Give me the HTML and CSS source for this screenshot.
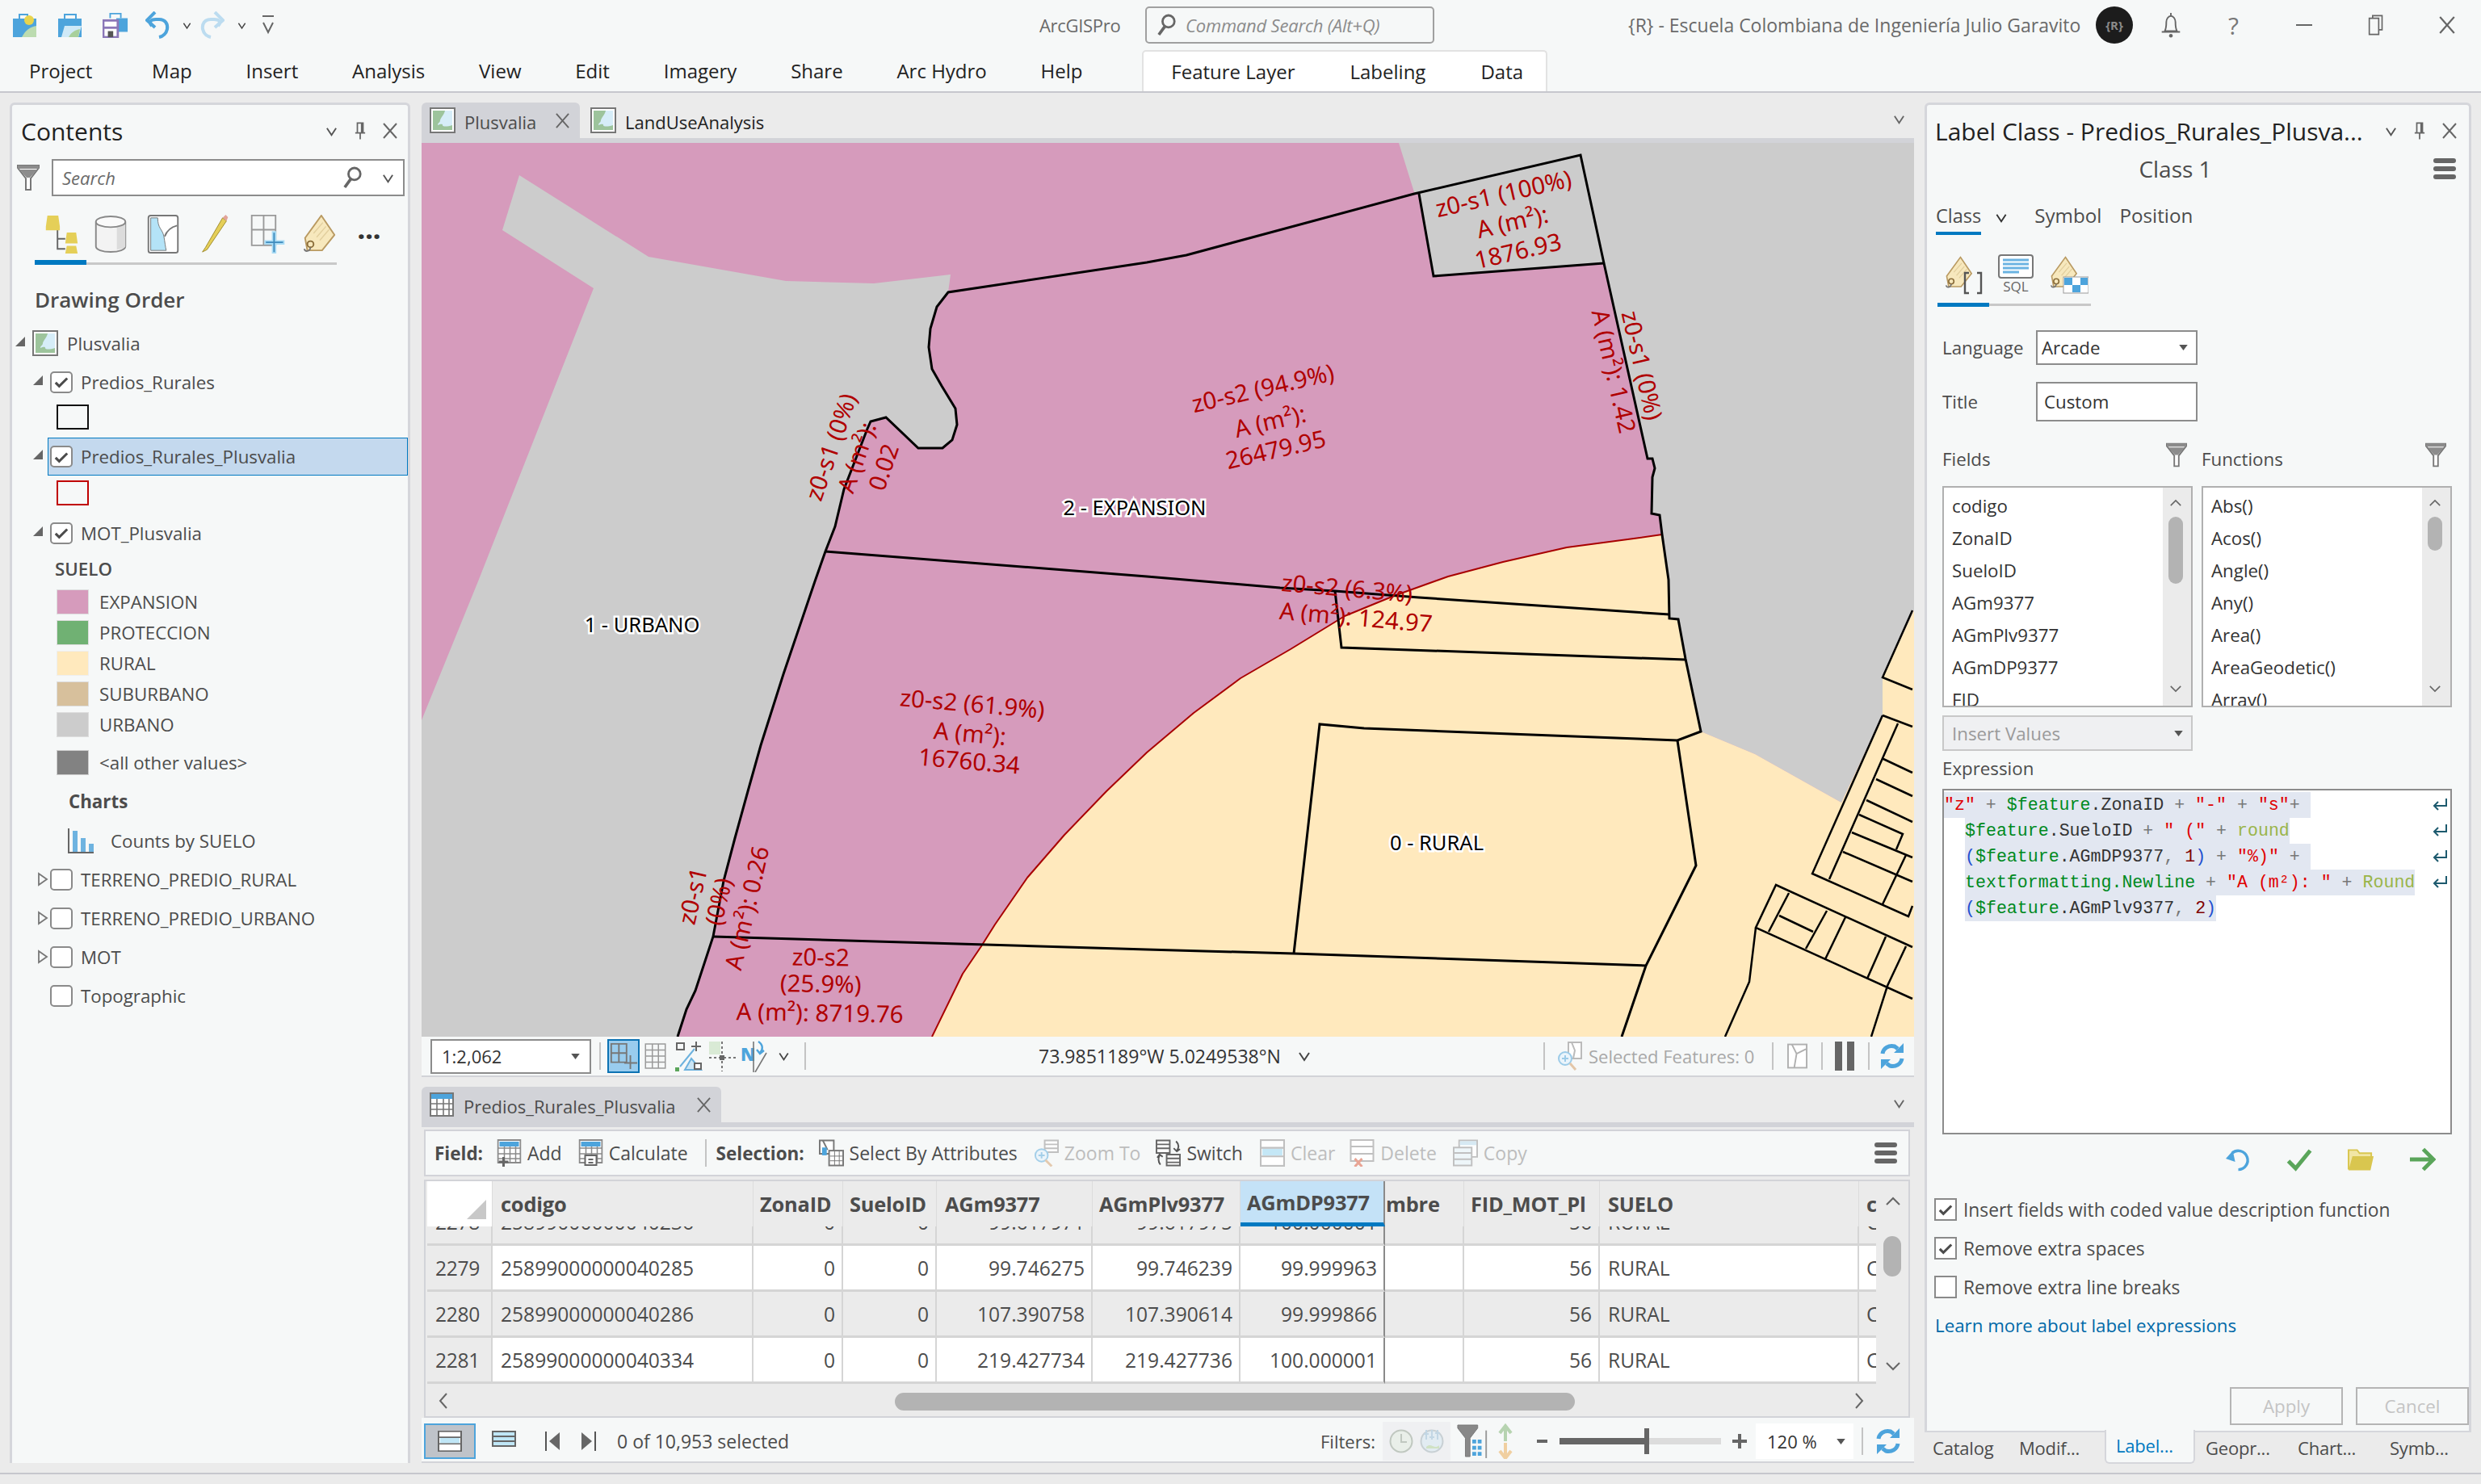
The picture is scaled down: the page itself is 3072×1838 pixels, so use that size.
FILE: index.html
```html
<!DOCTYPE html>
<html lang="en">
<head>
    <meta charset="UTF-8">
    <title>ArcGIS Pro - Plusvalia</title>
    <link rel="stylesheet" href="styles.css">
</head>
<body>
<svg class="defs" width="0" height="0">
    <symbol id="i-chev" viewBox="0 0 16 16"><path d="M2 4l6 9 6-9" fill="none" stroke="currentColor" stroke-width="2"/></symbol>
    <symbol id="i-x" viewBox="0 0 20 20"><path d="M2 1l16 18M18 1L2 19" fill="none" stroke="currentColor" stroke-width="2"/></symbol>
    <symbol id="i-pin" viewBox="0 0 16 26"><path d="M4 2h8v14H4zM1 16h14M8 16v9M10 2v14" fill="none" stroke="currentColor" stroke-width="2"/></symbol>
    <symbol id="i-funnel" viewBox="0 0 28 32"><path d="M1 1h26v3L17 17v14h-6V17L1 4z" fill="#fff" stroke="#777" stroke-width="2"/><path d="M1 1h26v4H1zM3 6h22l-9 10h-4z" fill="#8c8c8c"/></symbol>
    <symbol id="i-search" viewBox="0 0 26 30"><circle cx="15" cy="10" r="8" fill="none" stroke="#666" stroke-width="3"/><path d="M10 17L2 28" stroke="#666" stroke-width="4"/></symbol>
    <symbol id="i-map" viewBox="0 0 32 32"><rect x="1" y="1" width="30" height="30" fill="#fff" stroke="#777" stroke-width="2"/><rect x="4" y="4" width="24" height="24" fill="#d6edf8"/><path d="M4 4h15c-1 5-5 8-6 12 0 3-3 3-3 6 3-1 6-2 6 0 0 2 6 2 12 0v6H4z" fill="#9dc49c"/></symbol>
    <symbol id="i-check" viewBox="0 0 20 20"><path d="M2 11l5 5L18 5" fill="none" stroke="#4c4c4c" stroke-width="3.4"/></symbol>
    <symbol id="i-open" viewBox="0 0 14 14"><path d="M13 1v12H1z" fill="#666"/></symbol>
    <symbol id="i-closed" viewBox="0 0 14 18"><path d="M2 2l10 7-10 7z" fill="none" stroke="#777" stroke-width="1.8"/></symbol>
    <symbol id="i-ham" viewBox="0 0 28 26"><rect width="28" height="6" rx="3" fill="#666"/><rect y="10" width="28" height="6" rx="3" fill="#666"/><rect y="20" width="28" height="6" rx="3" fill="#666"/></symbol>
    <symbol id="i-drop" viewBox="0 0 12 8"><path d="M0 0h12L6 8z" fill="#555"/></symbol>
    <symbol id="i-refresh" viewBox="0 0 32 34"><path d="M4 14C5 7 12 3 19 5l4 3M28 20c-1 7-8 11-15 9l-4-3" fill="none" stroke="#4da4dc" stroke-width="5"/><path d="M30 1v12H18zM2 33V21h12z" fill="#4da4dc"/></symbol>
    <symbol id="i-tag" viewBox="0 0 42 50"><path d="M24 1l17 25-16 20H6L3 30z" fill="#f7e8bd" stroke="#b99a62" stroke-width="2"/><path d="M14 24l12-14M18 29l12-14M22 33l12-14" stroke="#e2cf9e" stroke-width="1.5"/><circle cx="10" cy="38" r="4" fill="none" stroke="#8a6d3a" stroke-width="2"/><path d="M10 42c-1 6-7 6-8 2" fill="none" stroke="#777" stroke-width="2"/></symbol>
    <symbol id="i-tablerow" viewBox="0 0 30 30"><rect x="1" y="1" width="28" height="28" fill="#fff" stroke="#8a8a8a" stroke-width="2"/><rect x="3" y="3" width="24" height="6" fill="#4da4dc"/><path d="M1 11h28M1 18h28M1 24h28M9 9v20M16 9v20M23 9v20" stroke="#8a8a8a" stroke-width="1.5"/></symbol>
    <symbol id="i-rows" viewBox="0 0 30 32" preserveAspectRatio="none"><rect x="1" y="1" width="28" height="30" fill="#fff" stroke="currentColor" stroke-width="2"/><rect x="3" y="11" width="24" height="8" fill="#bfe6f6"/><path d="M1 10h28M1 20h28" stroke="currentColor" stroke-width="2"/></symbol>
    <symbol id="i-wrap" viewBox="0 0 18 16"><path d="M17 1v9H3" fill="none" stroke="#1d5a6e" stroke-width="2"/><path d="M7 5l-5 5 5 5" fill="none" stroke="#1d5a6e" stroke-width="2"/></symbol>
</svg>

<div class="app">
    <header class="titlebar">
        <div class="qat">
            <svg class="qat-icon" viewBox="0 0 32 32"><path d="M9 8V3h10v5" fill="none" stroke="#4da4dc" stroke-width="2"/><rect x="1" y="8" width="29" height="23" fill="#4da4dc"/><path d="M12 31c5-9 9-12 18-14v14z" fill="#bcdcb0"/><circle cx="21" cy="10" r="6" fill="#e8d44d"/></svg>
            <svg class="qat-icon" viewBox="0 0 32 32"><path d="M9 8V3h14v5" fill="none" stroke="#4da4dc" stroke-width="2"/><path d="M1 31V8h29v23z" fill="#4da4dc"/><path d="M5 31l4-14h21l-4 14z" fill="#cfe9f7"/><path d="M14 31c3-6 8-9 14-10l-2 10z" fill="#a8d09c"/></svg>
            <svg class="qat-icon" viewBox="0 0 34 34"><path d="M10 8V2h14v6" fill="none" stroke="#4da4dc" stroke-width="2"/><rect x="18" y="8" width="15" height="18" fill="#4da4dc"/><rect x="1" y="11" width="19" height="22" fill="#fff" stroke="#8b77b8" stroke-width="3"/><rect x="1" y="19" width="19" height="3" fill="#8b77b8"/><rect x="7" y="25" width="7" height="8" fill="#555"/></svg>
            <svg class="qat-wide" viewBox="0 0 30 34"><path d="M8 18C4 14 6 10 13 10h4c8 0 11 6 10 12-1 5-5 9-10 10" fill="none" stroke="#4da4dc" stroke-width="4"/><path d="M12 1L2 11l10 9" fill="none" stroke="#4da4dc" stroke-width="4"/></svg>
            <svg class="qat-chev"><use href="#i-chev"/></svg>
            <svg class="qat-wide faint" viewBox="0 0 30 34"><path d="M22 18c4-4 2-8-5-8h-4C5 10 2 16 3 22c1 5 5 9 10 10" fill="none" stroke="#bcdcf0" stroke-width="4"/><path d="M18 1l10 10-10 9" fill="none" stroke="#bcdcf0" stroke-width="4"/></svg>
            <svg class="qat-chev"><use href="#i-chev"/></svg>
            <svg class="qat-more" viewBox="0 0 16 26"><path d="M1 2h14" stroke="#666" stroke-width="2"/><path d="M2 10l6 12 6-12" fill="none" stroke="#666" stroke-width="2"/></svg>
        </div>
        <span class="app-name">ArcGISPro</span>
        <div class="cmd-search">
            <svg class="cmd-ico"><use href="#i-search"/></svg>
            <span>Command Search (Alt+Q)</span>
        </div>
        <div class="user-area">
            <span class="org">{R} - Escuela Colombiana de Ingeniería Julio Garavito</span>
            <span class="avatar">{R}</span>
            <svg class="bell" viewBox="0 0 28 34"><path d="M14 1v4M6 25c2-4 2-8 2-12 0-4 3-8 6-8s6 4 6 8c0 4 0 8 2 12zM2 26h24" fill="none" stroke="#666" stroke-width="2"/><circle cx="14" cy="31" r="2.4" fill="#666"/></svg>
            <span class="help">?</span>
            <span class="min"></span>
            <svg class="restore" viewBox="0 0 24 30"><path d="M7 5V1h14v21h-5M2 5h14v24H2z" fill="none" stroke="#666" stroke-width="2"/></svg>
            <svg class="win-x"><use href="#i-x"/></svg>
        </div>
    </header>

    <nav class="ribbon">
        <span class="rib-first">Project</span>
        <span>Map</span><span>Insert</span><span>Analysis</span><span>View</span><span>Edit</span><span>Imagery</span><span>Share</span><span>Arc Hydro</span><span>Help</span>
        <div class="rib-context"><span>Feature Layer</span><span>Labeling</span><span>Data</span></div>
    </nav>

    <div class="workspace">
        <!-- contents pane -->
        <aside class="contents">
            <div class="pane-head">
                <span class="contents-title">Contents</span>
                <div class="pane-ctl"><svg class="c-chev"><use href="#i-chev"/></svg><svg class="c-pin"><use href="#i-pin"/></svg><svg class="c-x"><use href="#i-x"/></svg></div>
            </div>
            <div class="search-row">
                <svg class="funnel"><use href="#i-funnel"/></svg>
                <div class="search-box"><span>Search</span><svg class="search-ico"><use href="#i-search"/></svg><svg class="c-chev"><use href="#i-chev"/></svg></div>
            </div>
            <div class="view-icons">
                <svg viewBox="0 0 46 50" class="vi vi-tree"><path d="M18 18v26h10M18 31h10" fill="none" stroke="#666" stroke-width="2"/><path d="M5 1h14l2 14H3zM3 15h18v5H3z" fill="#e5cf58"/><path d="M30 23h12l2 14H28zM30 40h12l2 10H28z" fill="#e5cf58"/></svg>
                <svg viewBox="0 0 40 50" class="vi vi-db"><path d="M1 9v32c0 4 8 7 19 7s19-3 19-7V9" fill="#f3f3f3" stroke="#888" stroke-width="2"/><path d="M28 16v29c5-1 11-2 11-4V12z" fill="#dcdcdc"/><ellipse cx="20" cy="9" rx="19" ry="7" fill="#fafafa" stroke="#888" stroke-width="2"/></svg>
                <svg viewBox="0 0 40 50" class="vi vi-sheet"><rect x="1" y="1" width="38" height="48" rx="3" fill="#fff" stroke="#777" stroke-width="2"/><path d="M4 4h9c0 14 6 14 8 24 1 6 2 14 3 18H4z" fill="#b4e3f7" stroke="#777"/><path d="M22 28c3-8 8-12 16-14" fill="none" stroke="#777" stroke-width="2"/></svg>
                <svg viewBox="0 0 36 50" class="vi vi-pencil"><path d="M28 4L6 42l-4 6 6-3L33 8z" fill="#e5cf58" stroke="#a08c30"/><path d="M28 4l5 4 2-5-3-3z" fill="#e2a49a"/></svg>
                <svg viewBox="0 0 46 52" class="vi vi-grid"><path d="M1 1h32v40H1zM17 1v40M1 20h32" fill="none" stroke="#999" stroke-width="2"/><path d="M28 22h6v12h11v6H34v12h-6V40H18v-6h10z" fill="#a9dcf5"/><path d="M31 24v26M20 37h23" stroke="#3f8bbd" stroke-width="2"/></svg>
                <svg viewBox="0 0 42 50" class="vi vi-tag"><use href="#i-tag"/></svg>
                <span class="vi-dots">...</span>
            </div>
            <div class="view-bar"><span></span></div>
            <h3 class="drawing-order">Drawing Order</h3>
            <ul class="tree">
                <li class="row map-row"><svg class="exp"><use href="#i-open"/></svg><svg class="map-ico"><use href="#i-map"/></svg><span>Plusvalia</span></li>
                <li class="row layer"><svg class="exp"><use href="#i-open"/></svg><span class="cb"><svg><use href="#i-check"/></svg></span><span>Predios_Rurales</span></li>
                <li class="sw-row"><span class="sw sw-black"></span></li>
                <li class="row layer selected"><svg class="exp"><use href="#i-open"/></svg><span class="cb"><svg><use href="#i-check"/></svg></span><span>Predios_Rurales_Plusvalia</span></li>
                <li class="sw-row sw-row-tall"><span class="sw sw-red"></span></li>
                <li class="row layer"><svg class="exp"><use href="#i-open"/></svg><span class="cb"><svg><use href="#i-check"/></svg></span><span>MOT_Plusvalia</span></li>
                <li class="legend-head">SUELO</li>
                <li class="legend"><span class="sw sw-exp"></span>EXPANSION</li>
                <li class="legend"><span class="sw sw-pro"></span>PROTECCION</li>
                <li class="legend"><span class="sw sw-rur"></span>RURAL</li>
                <li class="legend"><span class="sw sw-sub"></span>SUBURBANO</li>
                <li class="legend"><span class="sw sw-urb"></span>URBANO</li>
                <li class="legend legend-other"><span class="sw sw-oth"></span>&lt;all other values&gt;</li>
                <li class="charts-head">Charts</li>
                <li class="chart-row"><svg viewBox="0 0 32 32" class="chart-ico"><path d="M1 1v30h31" fill="none" stroke="#666" stroke-width="2"/><rect x="6" y="4" width="6" height="26" fill="#6eb3e0"/><rect x="16" y="13" width="6" height="17" fill="#6eb3e0"/><rect x="26" y="20" width="6" height="10" fill="#6eb3e0"/></svg>Counts by SUELO</li>
                <li class="row layer"><svg class="exp-c"><use href="#i-closed"/></svg><span class="cb"></span><span>TERRENO_PREDIO_RURAL</span></li>
                <li class="row layer"><svg class="exp-c"><use href="#i-closed"/></svg><span class="cb"></span><span>TERRENO_PREDIO_URBANO</span></li>
                <li class="row layer"><svg class="exp-c"><use href="#i-closed"/></svg><span class="cb"></span><span>MOT</span></li>
                <li class="row layer no-exp"><span class="cb"></span><span>Topographic</span></li>
            </ul>
        </aside>

        <!-- map and table -->
        <main class="center">
            <div class="tabstrip">
                <div class="doc-tab active"><svg class="map-ico"><use href="#i-map"/></svg><span>Plusvalia</span><svg class="tab-x"><use href="#i-x"/></svg></div>
                <div class="doc-tab second"><svg class="map-ico"><use href="#i-map"/></svg><span>LandUseAnalysis</span></div>
                <svg class="strip-chev"><use href="#i-chev"/></svg>
            </div>
            <div class="strip-line"></div>
            <svg class="map" viewBox="522 177 1848 1107" width="1848" height="1107">
                <rect class="f-pink" x="522" y="177" width="1848" height="1107"/>
                <path class="f-gray" d="M643 217L622 285 735 357 592 720 522 892V1284H839L850 1250 861 1227 883 1160 896 1091 910 1038 926 980 942 923 970 835 1009 720 1022 683 1034 652 1045 606 1074 531 1078 522 1097 517 1137 555H1167L1179 545 1185 526 1183 506 1166 478 1154 457 1150 430 1152 407 1160 380 1174 362 1177 340 1082 351 973 348 803 318z"/>
                <path class="f-gray" d="M1732 177H2370V756L2331 839V886L2280 994 2173 934 2106 906 2087 816 2078 767 2067 766 2066 718 2058 662 2055 638 2045 636 2046 591 2049 580 2046 568 2040 568 1986 326 1775 342 1757 240 1751 238z"/>
                <path class="f-cream" d="M2058 662L2023 667 1940 678 1861 696 1793 714 1726 738 1665 763 1598 804 1536 840 1478 883 1420 932 1370 980 1318 1034 1272 1087 1232 1145 1215 1172 1192 1206 1154 1284H2370V756L2331 839V886L2280 994 2173 934 2106 906 2087 816 2078 767 2067 766 2066 718z"/>
                <path class="s-red" d="M2058 662L2023 667 1940 678 1861 696 1793 714 1726 738 1665 763 1598 804 1536 840 1478 883 1420 932 1370 980 1318 1034 1272 1087 1232 1145 1215 1172 1192 1206 1154 1284"/>
                <path class="s-black" d="M839 1284L850 1250 861 1227 883 1160 896 1091 910 1038 926 980 942 923 970 835 1009 720 1022 683 1034 652 1045 606 1074 531 1078 522 1097 517 1137 555H1167L1179 545 1185 526 1183 506 1166 478 1154 457 1150 430 1152 407 1160 380 1174 362 1420 325 1469 316 1751 240 1957 192 1986 326 2040 568 2046 568 2049 580 2046 591 2045 636 2055 638 2058 662 2066 718 2067 766 2078 767 2087 816 2106 906 2077 917 1689 902 1634 897 1602 1181"/>
                <path class="s-black" d="M1757 240L1775 342 1986 326"/>
                <path class="s-black" d="M1022 683L1420 714 1585 728 1653 732 1757 740 2067 761"/>
                <path class="s-black" d="M1653 732L1661 802 2087 817"/>
                <path class="s-black" d="M883 1160L1420 1176 1602 1181 2038 1196"/>
                <path class="s-black" d="M2077 917L2100 1072 2038 1196 2008 1284"/>
                <path class="s-thin" d="M2368 756L2331 839 2368 854M2331 886L2244 1082 2363 1135 2368 1122M2331 886L2368 900M2350 896L2265 1089M2332 940L2368 957M2323 965L2368 986M2311 991L2368 1018M2302 1009L2356 1033 2348 1052M2293 1031L2368 1062M2282 1055L2368 1092M2360 1059L2331 1120"/>
                <path class="s-thin" d="M2368 1173L2199 1096 2174 1149 2368 1237M2174 1149L2166 1216 2136 1284M2215 1106L2190 1154M2203 1134L2245 1154M2262 1128L2236 1175M2285 1136L2260 1188M2335 1160L2312 1212M2360 1172L2337 1221 2317 1284"/>

                <g class="lbl" transform="translate(1864 250) rotate(-13)"><text>z0-s1 (100%)</text></g>
                <g class="lbl" transform="translate(1875 285) rotate(-13)"><text>A (m²):</text></g>
                <g class="lbl" transform="translate(1882 321) rotate(-13)"><text>1876.93</text></g>
                <g class="lbl" transform="translate(1566 491) rotate(-13)"><text>z0-s2 (94.9%)</text></g>
                <g class="lbl" transform="translate(1575 532) rotate(-13)"><text>A (m²):</text></g>
                <g class="lbl" transform="translate(1582 567) rotate(-13)"><text>26479.95</text></g>
                <g class="lbl" transform="translate(2023 455) rotate(77)"><text>z0-s1 (0%)</text></g>
                <g class="lbl" transform="translate(1988 462) rotate(77)"><text>A (m²): 1.42</text></g>
                <g class="lbl" transform="translate(1039 557) rotate(-71)"><text>z0-s1 (0%)</text></g>
                <g class="lbl" transform="translate(1071 570) rotate(-71)"><text>A (m²):</text></g>
                <g class="lbl" transform="translate(1104 582) rotate(-71)"><text>0.02</text></g>
                <g class="lbl" transform="translate(1667 739) rotate(5)"><text>z0-s2 (6.3%)</text></g>
                <g class="lbl" transform="translate(1678 775) rotate(5)"><text>A (m²): 124.97</text></g>
                <g class="lbl" transform="translate(1203 882) rotate(5)"><text>z0-s2 (61.9%)</text></g>
                <g class="lbl" transform="translate(1200 919) rotate(5)"><text>A (m²):</text></g>
                <g class="lbl" transform="translate(1199 953) rotate(5)"><text>16760.34</text></g>
                <g class="lbl" transform="translate(868 1112) rotate(-77)"><text>z0-s1</text></g>
                <g class="lbl" transform="translate(900 1119) rotate(-77)"><text>(0%)</text></g>
                <g class="lbl" transform="translate(935 1127) rotate(-77)"><text>A (m²): 0.26</text></g>
                <g class="lbl" transform="translate(1016 1196) rotate(1)"><text>z0-s2</text></g>
                <g class="lbl" transform="translate(1016 1229) rotate(1)"><text>(25.9%)</text></g>
                <g class="lbl" transform="translate(1015 1265) rotate(1)"><text>A (m²): 8719.76</text></g>
                <text class="halo" x="1405" y="638">2 - EXPANSION</text>
                <text class="halo" x="795" y="783">1 - URBANO</text>
                <text class="halo" x="1779" y="1053">0 - RURAL</text>
            </svg>

            <div class="map-status">
                <div class="scale-box"><span>1:2,062</span><svg class="drop"><use href="#i-drop"/></svg></div>
                <i class="sep sep-a"></i>
                <div class="tool-on"><svg viewBox="0 0 38 38"><path d="M3 3h20v24H3zM13 3v24M3 15h20" fill="none" stroke="#777" stroke-width="2"/><path d="M28 18v18M20 28h17" stroke="#777" stroke-width="2"/></svg></div>
                <svg class="st-grid" viewBox="0 0 28 34"><path d="M1 1h26v32H1zM10 1v32M18 1v32M1 9h26M1 17h26M1 25h26" fill="none" stroke="#9a9a9a" stroke-width="1.6"/></svg>
                <svg class="st-snap" viewBox="0 0 34 38"><path d="M2 3h9v8H2zM26 1v12M20 7h12" fill="none" stroke="#666" stroke-width="2"/><path d="M6 32L24 10M20 22l-8 14h20z" fill="#cbe6f6" stroke="#6db2de" stroke-width="2"/><rect x="0" y="33" width="5" height="5" fill="#5aa55a"/><rect x="24" y="28" width="8" height="7" fill="#fff" stroke="#666" stroke-width="2"/></svg>
                <svg class="st-guide" viewBox="0 0 34 38"><rect x="1" y="1" width="14" height="16" fill="#d9ead5"/><path d="M17 1v37M1 21h33" stroke="#777" stroke-width="2" stroke-dasharray="3 3"/><rect x="14" y="18" width="6" height="6" fill="#666"/></svg>
                <svg class="st-north" viewBox="0 0 34 40"><text class="north-n" x="0" y="26">N</text><path d="M16 2v38M18 40L32 16" stroke="#777" stroke-width="1.6"/><path d="M22 2c6 4 6 10 2 14M20 12l4 5 5-4" fill="none" stroke="#4da4dc" stroke-width="2.4"/></svg>
                <svg class="st-chev"><use href="#i-chev"/></svg>
                <i class="sep"></i>
                <div class="coords"><span>73.9851189°W 5.0249538°N</span><svg class="st-chev"><use href="#i-chev"/></svg></div>
                <i class="sep"></i>
                <div class="sel-features"><svg class="sel-ico" viewBox="0 0 32 36"><rect x="14" y="1" width="16" height="20" fill="#fff" stroke="#bbb" stroke-width="2"/><path d="M18 1l4 10-2 10" fill="none" stroke="#bbb" stroke-width="2"/><circle cx="10" cy="21" r="8" fill="#eaf4fb" stroke="#9ccbe8" stroke-width="2"/><path d="M6 21h8M10 17v8" stroke="#9ccbe8" stroke-width="2"/><path d="M16 27l7 8" stroke="#e3c6a8" stroke-width="3"/></svg><span>Selected Features: 0</span></div>
                <i class="sep sep-b"></i>
                <svg class="st-sheet" viewBox="0 0 26 32"><rect x="1" y="1" width="24" height="30" fill="#fff" stroke="#b0b0b0" stroke-width="2"/><path d="M6 1l6 12-3 18M12 13l12-6" fill="none" stroke="#b0b0b0" stroke-width="2"/></svg>
                <i class="sep sep-c"></i>
                <span class="pause"></span>
                <i class="sep sep-d"></i>
                <svg class="st-refresh"><use href="#i-refresh"/></svg>
            </div>

            <div class="tabstrip table-strip">
                <div class="doc-tab active table-tab"><svg class="tbl-ico" viewBox="0 0 30 30"><rect x="1" y="1" width="28" height="28" fill="#fff" stroke="#777" stroke-width="2"/><rect x="2" y="2" width="26" height="6" fill="#4da4dc"/><path d="M1 14h28M1 21h28M9 8v21M17 8v21M24 8v21" stroke="#777" stroke-width="1.6"/></svg><span>Predios_Rurales_Plusvalia</span><svg class="tab-x"><use href="#i-x"/></svg></div>
                <svg class="strip-chev"><use href="#i-chev"/></svg>
            </div>
            <div class="strip-line"></div>

            <div class="table-body">
                <div class="tbl-toolbar">
                    <b class="tb-field">Field:</b>
                    <svg class="tb-ico t-add" viewBox="0 0 30 34"><use href="#i-tablerow" width="30" height="30"/><path d="M8 22v12M2 28h12" stroke="#666" stroke-width="3"/></svg><span>Add</span>
                    <svg class="tb-ico t-calc" viewBox="0 0 30 34"><use href="#i-tablerow" width="30" height="30"/><rect x="8" y="20" width="14" height="12" fill="#fff" stroke="#666" stroke-width="2"/><path d="M12 25h6M12 29h6" stroke="#666" stroke-width="2"/></svg><span>Calculate</span>
                    <i class="sep sep-tb"></i>
                    <b class="tb-sel">Selection:</b>
                    <svg class="tb-ico t-sba" viewBox="0 0 32 34"><path d="M1 1h18v17H1z" fill="#fff" stroke="#777" stroke-width="2"/><path d="M5 1l6 12" stroke="#777" stroke-width="2"/><rect x="4" y="10" width="6" height="10" fill="#4da4dc"/><rect x="13" y="14" width="18" height="19" fill="#fff" stroke="#777" stroke-width="2"/><path d="M14 21h16M14 27h16M20 15v18M26 15v18" stroke="#777"/></svg><span>Select By Attributes</span>
                    <svg class="tb-ico t-zoom dim" viewBox="0 0 32 34"><path d="M14 1h17v5H14zM14 6h17v5H14zM14 11h17v5H14z" fill="#fff" stroke="#bbb" stroke-width="2"/><circle cx="10" cy="20" r="8" fill="#eaf4fb" stroke="#9ccbe8" stroke-width="2"/><path d="M6 20h8M10 16v8" stroke="#9ccbe8" stroke-width="2"/><path d="M15 26l8 8" stroke="#e3c6a8" stroke-width="3"/></svg><span class="dimmed">Zoom To</span>
                    <svg class="tb-ico t-switch" viewBox="0 0 32 34"><path d="M1 1h17v16H1zM1 6h17M1 11h17M14 19h17v14H14zM14 24h17M14 29h17" fill="#fff" stroke="#666" stroke-width="2"/><path d="M26 2c4 4 4 8 1 12M23 11l4 4 4-3M6 32c-3-4-3-8-1-12M2 23l3-4 4 3" fill="none" stroke="#555" stroke-width="2"/></svg><span>Switch</span>
                    <svg class="tb-ico t-clear dim"><use href="#i-rows"/></svg><span class="dimmed">Clear</span>
                    <svg class="tb-ico t-delete dim" viewBox="0 0 30 34"><path d="M1 1h28v26H1zM1 9h28M1 18h28" fill="#fff" stroke="#bbb" stroke-width="2"/><path d="M6 24l9 10M15 24l-9 10" stroke="#e79b8a" stroke-width="3"/></svg><span class="dimmed">Delete</span>
                    <svg class="tb-ico t-copy dim" viewBox="0 0 32 34"><path d="M8 1h23v21H8z" fill="#fff" stroke="#bbb" stroke-width="2"/><rect x="9" y="2" width="21" height="5" fill="#d3e8f3"/><path d="M1 10h23v23H1zM1 17h23M1 25h23" fill="#eef6fa" stroke="#bbb" stroke-width="2"/></svg><span class="dimmed">Copy</span>
                    <svg class="t-ham"><use href="#i-ham"/></svg>
                </div>

                <div class="grid">
                    <div class="grid-main">
                        <table class="attr">
                            <colgroup>
                                <col class="c-row"><col class="c-code"><col class="c-zona"><col class="c-suelo"><col class="c-agm"><col class="c-plv"><col class="c-dp"><col class="c-mbre"><col class="c-fid"><col class="c-sl"><col class="c-last">
                            </colgroup>
                            <thead>
                                <tr>
                                    <th class="corner"><span class="corner-tri"></span></th>
                                    <th>codigo</th><th class="r">ZonaID</th><th class="r">SueloID</th><th>AGm9377</th><th class="r">AGmPlv9377</th><th class="r col-sel">AGmDP9377</th><th class="mbre">mbre</th><th class="r">FID_MOT_Pl</th><th>SUELO</th><th class="clip">c</th>
                                </tr>
                            </thead>
                            <tbody>
                                <tr class="partial odd">
                                    <td class="rh"><div>2278</div></td><td><div>25899000000040236</div></td><td class="n"><div>0</div></td><td class="n"><div>0</div></td><td class="n"><div>99.617971</div></td><td class="n"><div>99.617975</div></td><td class="n col-edge"><div>100.000001</div></td><td></td><td class="n"><div>56</div></td><td><div>RURAL</div></td><td class="clip"><div>C</div></td>
                                </tr>
                                <tr>
                                    <td class="rh">2279</td><td>25899000000040285</td><td class="n">0</td><td class="n">0</td><td class="n">99.746275</td><td class="n">99.746239</td><td class="n col-edge">99.999963</td><td></td><td class="n">56</td><td>RURAL</td><td class="clip">C</td>
                                </tr>
                                <tr class="odd">
                                    <td class="rh">2280</td><td>25899000000040286</td><td class="n">0</td><td class="n">0</td><td class="n">107.390758</td><td class="n">107.390614</td><td class="n col-edge">99.999866</td><td></td><td class="n">56</td><td>RURAL</td><td class="clip">C</td>
                                </tr>
                                <tr>
                                    <td class="rh">2281</td><td>25899000000040334</td><td class="n">0</td><td class="n">0</td><td class="n">219.427734</td><td class="n">219.427736</td><td class="n col-edge">100.000001</td><td></td><td class="n">56</td><td>RURAL</td><td class="clip">C</td>
                                </tr>
                            </tbody>
                        </table>
                        <div class="hscroll"><svg class="hs-l" viewBox="0 0 12 20"><path d="M10 1L2 10l8 9" fill="none" stroke="#666" stroke-width="2"/></svg><span class="hs-thumb"></span><svg class="hs-r" viewBox="0 0 12 20"><path d="M2 1l8 9-8 9" fill="none" stroke="#666" stroke-width="2"/></svg></div>
                    </div>
                    <div class="vscroll"><svg class="vs-up" viewBox="0 0 18 12"><path d="M1 10l8-8 8 8" fill="none" stroke="#666" stroke-width="2"/></svg><span class="vs-thumb"></span><svg class="vs-dn" viewBox="0 0 18 12"><path d="M1 2l8 8 8-8" fill="none" stroke="#666" stroke-width="2"/></svg></div>
                </div>

                <div class="tbl-status">
                    <div class="view-on"><svg class="vw-ico"><use href="#i-rows"/></svg></div>
                    <svg class="vw2" viewBox="0 0 30 20"><rect x="1" y="1" width="28" height="18" fill="#bfe6f6" stroke="#666" stroke-width="2"/><path d="M1 7h28M1 13h28" stroke="#666" stroke-width="2"/></svg>
                    <svg class="nav-first" viewBox="0 0 20 26"><path d="M2 1v24" stroke="#555" stroke-width="2"/><path d="M19 2v22L6 13z" fill="#666"/></svg>
                    <svg class="nav-last" viewBox="0 0 20 26"><path d="M18 1v24" stroke="#555" stroke-width="2"/><path d="M1 2v22l13-11z" fill="#666"/></svg>
                    <span class="sel-count">0 of 10,953 selected</span>
                    <span class="filters">Filters:</span>
                    <div class="filter-box">
                        <svg viewBox="0 0 30 30" class="fb-ico"><circle cx="15" cy="15" r="13.5" fill="#e9efe9" stroke="#c0c8c0" stroke-width="2"/><path d="M15 6v10h7" fill="none" stroke="#c0c8c0" stroke-width="2"/></svg>
                        <svg viewBox="0 0 30 30" class="fb-ico"><circle cx="15" cy="15" r="13.5" fill="#e2ecf2" stroke="#c8d0d4" stroke-width="2"/><path d="M8 1v12M15 1v12M22 1v12M5 6h6M12 10h6M19 5h6" stroke="#c2d6e4" stroke-width="2"/><path d="M8 22c6-6 10 4 16-2v4H8z" fill="#d0e2c4"/></svg>
                    </div>
                    <svg class="f-fun" viewBox="0 0 42 44"><path d="M1 1h26v4L17 18v24h-6V18L1 5z" fill="#888" stroke="#777"/><path d="M20 20h5v5h-5zM27 20h5v5h-5zM20 28h5v5h-5zM27 28h5v5h-5zM20 36h5v5h-5zM27 36h5v5h-5z" fill="#4da4dc"/><path d="M38 8v36" stroke="#999" stroke-width="2"/></svg>
                    <svg class="f-arr" viewBox="0 0 20 44"><path d="M10 22V4M3 12l7-9 7 9" fill="none" stroke="#b6d3b0" stroke-width="4"/><path d="M10 24v18M3 34l7 9 7-9" fill="none" stroke="#f0cfa0" stroke-width="4"/></svg>
                    <span class="z-minus"></span>
                    <div class="slider"><span class="slider-fill"></span><span class="slider-knob"></span></div>
                    <span class="z-plus"></span>
                    <div class="zoom-box"><span>120 %</span><svg class="drop"><use href="#i-drop"/></svg></div>
                    <i class="sep sep-z"></i>
                    <svg class="st-refresh"><use href="#i-refresh"/></svg>
                </div>
            </div>
        </main>

        <!-- label class pane -->
        <aside class="right">
            <div class="label-pane">
                <div class="pane-head lc-head">
                    <span class="lc-title">Label Class - Predios_Rurales_Plusva...</span>
                    <div class="pane-ctl"><svg class="c-chev"><use href="#i-chev"/></svg><svg class="c-pin"><use href="#i-pin"/></svg><svg class="c-x"><use href="#i-x"/></svg></div>
                </div>
                <div class="class-row"><span>Class 1</span><svg class="cls-ham"><use href="#i-ham"/></svg></div>
                <div class="lc-tabs">
                    <span class="lc-tab on">Class</span><svg class="lc-chev"><use href="#i-chev"/></svg>
                    <span class="lc-tab sym">Symbol</span><span class="lc-tab">Position</span>
                </div>
                <div class="lc-icons">
                    <svg viewBox="0 0 48 50" class="lc-i1"><use href="#i-tag" width="34" height="46"/><path d="M30 23h-5v25h5M40 23h5v25h-5" fill="none" stroke="#555" stroke-width="2.4"/></svg>
                    <div class="lc-i2"><svg viewBox="0 0 44 30"><rect x="1" y="1" width="42" height="28" rx="3" fill="#fff" stroke="#777" stroke-width="2"/><path d="M6 7h32M6 12h32M6 17h32M6 22h20" stroke="#6bb3e2" stroke-width="3"/></svg><span>SQL</span></div>
                    <svg viewBox="0 0 48 50" class="lc-i3"><use href="#i-tag" width="34" height="46"/><rect x="17" y="28" width="31" height="20" fill="#fff" stroke="#999"/><path d="M18 29h10v9H18zM38 29h9v9h-9zM28 38h10v9H28z" fill="#4da4dc"/></svg>
                </div>
                <div class="lc-bar"><span></span></div>

                <div class="form-row lang"><label>Language</label><div class="combo"><span>Arcade</span><svg class="drop"><use href="#i-drop"/></svg></div></div>
                <div class="form-row title-row"><label>Title</label><div class="combo txt"><span>Custom</span></div></div>

                <div class="list-heads">
                    <div class="list-head"><span>Fields</span><svg class="lh-funnel"><use href="#i-funnel"/></svg></div>
                    <div class="list-head"><span>Functions</span><svg class="lh-funnel"><use href="#i-funnel"/></svg></div>
                </div>
                <div class="lists">
                    <div class="listbox">
                        <ul><li>codigo</li><li>ZonaID</li><li>SueloID</li><li>AGm9377</li><li>AGmPlv9377</li><li>AGmDP9377</li><li>FID</li></ul>
                        <div class="lb-scroll"><svg class="lb-up" viewBox="0 0 18 12"><path d="M1 10l8-8 8 8" fill="none" stroke="#666" stroke-width="2"/></svg><span class="lb-thumb"></span><svg class="lb-dn" viewBox="0 0 18 12"><path d="M1 2l8 8 8-8" fill="none" stroke="#666" stroke-width="2"/></svg></div>
                    </div>
                    <div class="listbox">
                        <ul><li>Abs()</li><li>Acos()</li><li>Angle()</li><li>Any()</li><li>Area()</li><li>AreaGeodetic()</li><li>Array()</li></ul>
                        <div class="lb-scroll"><svg class="lb-up" viewBox="0 0 18 12"><path d="M1 10l8-8 8 8" fill="none" stroke="#666" stroke-width="2"/></svg><span class="lb-thumb short"></span><svg class="lb-dn" viewBox="0 0 18 12"><path d="M1 2l8 8 8-8" fill="none" stroke="#666" stroke-width="2"/></svg></div>
                    </div>
                </div>
                <div class="insert-values"><span>Insert Values</span><svg class="drop"><use href="#i-drop"/></svg></div>
                <div class="expr-label">Expression</div>
                <div class="editor">
                    <div class="code">
                        <div class="ln"><span class="hl"><b class="s">"z"</b> <b class="o">+</b> <b class="f">$feature</b>.ZonaID <b class="o">+</b> <b class="s">"-"</b> <b class="o">+</b> <b class="s">"s"</b><b class="o">+</b> </span></div>
                        <div class="ln in"><span class="hl"><b class="f">$feature</b>.SueloID <b class="o">+</b> <b class="s">" ("</b> <b class="o">+</b> <b class="k">round</b></span></div>
                        <div class="ln in"><span class="hl"><b class="p">(</b><b class="f">$feature</b>.AGmDP9377<b class="o">,</b> <b class="m">1</b><b class="p">)</b> <b class="o">+</b> <b class="s">"%)"</b> <b class="o">+</b> </span></div>
                        <div class="ln in"><span class="hl"><b class="f">textformatting.Newline</b> <b class="o">+</b> <b class="s">"A (m²): "</b> <b class="o">+</b> <b class="k">Round</b></span></div>
                        <div class="ln in"><span class="hl"><b class="p">(</b><b class="f">$feature</b>.AGmPlv9377<b class="o">,</b> <b class="m">2</b><b class="p">)</b></span></div>
                    </div>
                    <div class="wraps"><svg><use href="#i-wrap"/></svg><svg><use href="#i-wrap"/></svg><svg><use href="#i-wrap"/></svg><svg><use href="#i-wrap"/></svg></div>
                </div>
                <div class="expr-actions">
                    <svg viewBox="0 0 34 30"><path d="M9 7a12 12 0 1 1 8 21" fill="none" stroke="#4da4dc" stroke-width="3.5"/><path d="M1 14l9-10 3 14z" fill="#4da4dc"/></svg>
                    <svg viewBox="0 0 32 30"><path d="M2 17l9 9L29 4" fill="none" stroke="#5aa55a" stroke-width="5"/></svg>
                    <svg viewBox="0 0 34 30"><path d="M1 28V3h11l3 4h15v4" fill="#f1e6a5" stroke="#d9c64f" stroke-width="2"/><path d="M1 29l5-18h27l-4 18z" fill="#d9c64f"/></svg>
                    <svg viewBox="0 0 34 30"><path d="M1 15h28M18 2l13 13-13 13" fill="none" stroke="#5aa55a" stroke-width="5"/></svg>
                </div>
                <div class="opt"><span class="cb sq"><svg><use href="#i-check"/></svg></span>Insert fields with coded value description function</div>
                <div class="opt"><span class="cb sq"><svg><use href="#i-check"/></svg></span>Remove extra spaces</div>
                <div class="opt"><span class="cb sq"></span>Remove extra line breaks</div>
                <a class="learn" href="#">Learn more about label expressions</a>
                <div class="buttons"><button disabled>Apply</button><button disabled>Cancel</button></div>
            </div>
            <div class="dock-tabs">
                <span>Catalog</span><span>Modif...</span><span class="on">Label...</span><span>Geopr...</span><span>Chart...</span><span>Symb...</span>
            </div>
        </aside>
    </div>
    <div class="bottom-line"></div>
</div>
</body>
</html>
```

FILE: styles.css
```css
* {
    box-sizing: border-box;
}
html, body {
    margin: 0;
    padding: 0;
}
body {
    width: 3072px;
    height: 1838px;
    overflow: hidden;
    background: #ebebeb;
    color: #4c4c4c;
    font-family: "Open Sans", "Noto Sans", sans-serif;
    font-size: 22.3px;
}
svg {
    display: block;
    flex: none;
}
ul {
    list-style: none;
    margin: 0;
    padding: 0;
}
.defs {
    position: absolute;
}
.app {
    display: flex;
    flex-direction: column;
    height: 1838px;
}

/* title bar */
.titlebar {
    height: 62px;
    background: #f6f8f8;
    display: flex;
    align-items: center;
    font-size: 22px;
    color: #6a6a6a;
}
.qat {
    width: 1287px;
    padding-left: 15px;
    display: flex;
    align-items: center;
}
.qat-icon {
    width: 32px;
    height: 32px;
    margin-right: 24px;
}
.qat-wide {
    width: 30px;
    height: 34px;
    margin-left: -3px;
}
.qat-chev {
    width: 11px;
    height: 11px;
    margin: 0 14px 0 16px;
    color: #444;
}
.qat-more {
    width: 16px;
    height: 26px;
    margin-left: 5px;
}
.app-name {
    width: 131px;
    letter-spacing: -0.3px;
}
.cmd-search {
    width: 358px;
    height: 46px;
    border: 2px solid #a0a0a0;
    border-radius: 5px;
    display: flex;
    align-items: center;
    padding-left: 13px;
    font-style: italic;
    color: #8c8c8c;
    letter-spacing: -0.2px;
}
.cmd-ico {
    width: 24px;
    height: 28px;
    margin-right: 11px;
}
.user-area {
    margin-left: 240px;
    display: flex;
    align-items: center;
}
.org {
    width: 562px;
    white-space: nowrap;
    font-size: 23px;
}
.avatar {
    width: 46px;
    height: 46px;
    margin-left: 17px;
    border-radius: 50%;
    background: #1c1c1c;
    color: #8a8a8a;
    font-size: 15px;
    font-weight: 700;
    display: flex;
    align-items: center;
    justify-content: center;
}
.bell {
    width: 28px;
    height: 32px;
    margin-left: 33px;
}
.help {
    width: 20px;
    margin-left: 57px;
    font-size: 30px;
    color: #777;
}
.min {
    width: 20px;
    height: 2px;
    margin-left: 64px;
    background: #666;
}
.restore {
    width: 20px;
    height: 30px;
    margin-left: 69px;
}
.win-x {
    width: 22px;
    height: 22px;
    margin-left: 67px;
    color: #666;
}

/* ribbon */
.ribbon {
    height: 53px;
    background: #f6f8f8;
    border-bottom: 2px solid #c6c7cd;
    padding-left: 36px;
    display: flex;
    align-items: center;
    gap: 66.8px;
    font-size: 24px;
    color: #222;
    white-space: nowrap;
}
.rib-first {
    margin-right: 7px;
}
.rib-context {
    height: 51px;
    margin-left: 7px;
    width: 502px;
    padding: 0 34px;
    background: #fff;
    border: 2px solid #e2e2e2;
    border-bottom: none;
    border-radius: 5px 5px 0 0;
    display: flex;
    align-items: center;
    gap: 68px;
}

/* workspace columns */
.workspace {
    flex: 1;
    display: flex;
    padding: 12px 12px 0;
    min-height: 0;
}
.contents {
    width: 496px;
    background: #f6f8f8;
    border: 3px solid #d5d6db;
    border-bottom: none;
    border-radius: 6px 6px 0 0;
    display: flex;
    flex-direction: column;
}
.center {
    width: 1848px;
    margin-left: 14px;
    display: flex;
    flex-direction: column;
}
.right {
    width: 677px;
    margin-left: 13px;
    display: flex;
    flex-direction: column;
}
.bottom-line {
    height: 14px;
    border-bottom: 2px solid #c6c7cd;
    margin-bottom: 12px;
}

/* pane header */
.pane-head {
    height: 64px;
    flex: none;
    display: flex;
    align-items: center;
    padding-left: 11px;
    color: #222;
}
.contents-title {
    font-size: 30px;
    flex: 1;
}
.pane-ctl {
    display: flex;
    align-items: center;
    color: #666;
}
.c-chev {
    width: 15px;
    height: 15px;
    color: #555;
}
.c-pin {
    width: 14px;
    height: 24px;
    margin-left: 21px;
}
.c-x {
    width: 20px;
    height: 22px;
    margin: 0 12px 0 20px;
}
.search-row {
    height: 46px;
    display: flex;
    align-items: center;
    margin-top: 3px;
}
.funnel {
    width: 28px;
    height: 32px;
    margin-left: 6px;
}
.search-box {
    width: 437px;
    height: 46px;
    margin-left: 15px;
    background: #fff;
    border: 2px solid #8c8c8c;
    display: flex;
    align-items: center;
    padding: 0 11px;
    font-style: italic;
    font-size: 22px;
    color: #6a6a6a;
}
.search-box span {
    flex: 1;
}
.search-ico {
    width: 24px;
    height: 28px;
    margin-right: 24px;
}
.view-icons {
    height: 56px;
    margin-top: 19px;
    padding-left: 38px;
    display: flex;
    align-items: center;
}
.vi {
    height: 48px;
}
.vi-tree {
    width: 46px;
}
.vi-db {
    width: 40px;
    margin-left: 18px;
}
.vi-sheet {
    width: 40px;
    margin-left: 25px;
}
.vi-pencil {
    width: 36px;
    margin-left: 26px;
}
.vi-grid {
    width: 46px;
    margin-left: 25px;
}
.vi-tag {
    width: 42px;
    margin-left: 19px;
}
.vi-dots {
    margin: -12px 0 0 27px;
    font-size: 30px;
    font-weight: 800;
    letter-spacing: 1px;
    color: #333;
}
.view-bar {
    width: 374px;
    height: 3px;
    margin: 7px 0 0 28px;
    background: #c8c8c8;
}
.view-bar span {
    display: block;
    width: 64px;
    height: 6px;
    background: #0079c1;
    position: relative;
    top: -3px;
}
.drawing-order {
    margin: 21px 0 0 28px;
    height: 52px;
    line-height: 44px;
    font-size: 26px;
    font-weight: 600;
    color: #4c4c4c;
}

/* tree */
.row {
    height: 48px;
    display: flex;
    align-items: center;
}
.map-row {
    padding-left: 3px;
}
.map-ico {
    width: 32px;
    height: 32px;
}
.map-row .map-ico {
    margin: 0 11px 0 0;
}
.layer {
    padding-left: 25px;
}
.exp {
    width: 14px;
    height: 14px;
    margin: 0 8px 4px 0;
}
.exp-c {
    width: 14px;
    height: 18px;
    margin: 0 2px 0 6px;
}
.no-exp {
    padding-left: 47px;
}
.cb {
    width: 28px;
    height: 27px;
    flex: none;
    margin-right: 10px;
    background: #fff;
    border: 2px solid #8a8a8a;
    border-radius: 5px;
    display: flex;
    align-items: center;
    justify-content: center;
}
.cb svg {
    width: 18px;
    height: 18px;
}
.selected {
    margin: 0 0 0 44px;
    padding-left: 0;
    position: relative;
    width: 446px;
    height: 47px;
    background: #c4d9ee;
    border: 1px solid #0079c1;
}
.selected .exp {
    position: absolute;
    left: -20px;
    top: 13px;
    margin: 0;
}
.selected .cb {
    margin-left: 2px;
}
.sw-row {
    height: 45px;
    padding: 4px 0 0 55px;
}
.sw-row-tall {
    height: 47px;
    padding-top: 6px;
}
.sw {
    display: block;
    width: 40px;
    height: 31px;
    flex: none;
}
.sw-black {
    border: 2px solid #111;
    background: #f6f8f8;
}
.sw-red {
    border: 2px solid #c00000;
    background: #f6f8f8;
}
.sw-exp { background: #d69bbc; border: 1px solid #ddd; }
.sw-pro { background: #70b173; border: 1px solid #ddd; }
.sw-rur { background: #ffe9bd; border: 1px solid #eee; }
.sw-sub { background: #d7c09c; border: 1px solid #ddd; }
.sw-urb { background: #cccccc; border: 1px solid #ddd; }
.sw-oth { background: #828282; border: 1px solid #ccc; }
.legend-head {
    height: 42px;
    padding: 2px 0 0 53px;
    line-height: 38px;
    font-weight: 600;
}
.legend {
    height: 38px;
    padding-left: 55px;
    display: flex;
    align-items: center;
    white-space: nowrap;
}
.legend .sw {
    margin-right: 13px;
}
.legend-other {
    margin-top: 9px;
}
.charts-head {
    height: 40px;
    margin-top: 10px;
    padding-left: 70px;
    line-height: 40px;
    font-weight: 700;
}
.chart-row {
    height: 48px;
    margin-top: 4px;
    padding-left: 69px;
    display: flex;
    align-items: center;
}
.chart-ico {
    width: 32px;
    height: 32px;
    margin-right: 21px;
}

/* tab strips */
.tabstrip {
    height: 44px;
    display: flex;
    align-items: flex-end;
    font-size: 22px;
}
.doc-tab {
    height: 44px;
    display: flex;
    align-items: center;
    padding: 0 7px 0 10px;
    border-radius: 6px 6px 0 0;
}
.doc-tab span {
    padding-top: 3px;
}
.doc-tab.active {
    width: 196px;
    background: #d2d3d8;
}
.doc-tab.second {
    margin-left: 3px;
    color: #222;
}
.doc-tab .map-ico {
    margin-right: 11px;
}
.tab-x {
    width: 19px;
    height: 21px;
    margin-left: auto;
    margin-right: 5px;
    color: #666;
}
.strip-chev {
    width: 15px;
    height: 15px;
    margin: 0 11px 16px auto;
    color: #666;
}
.strip-line {
    height: 6px;
    background: #d2d3d8;
}
.map {
    flex: none;
}

/* map colours */
.f-pink { fill: #d69bbc; }
.f-gray { fill: #cccccc; }
.f-cream { fill: #ffe9bd; }
.s-red {
    fill: none;
    stroke: #a80000;
    stroke-width: 2;
    stroke-linejoin: round;
}
.s-black {
    fill: none;
    stroke: #000;
    stroke-width: 3;
}
.s-thin {
    fill: none;
    stroke: #000;
    stroke-width: 2.5;
}
.lbl text {
    fill: #b00000;
    font-family: "Noto Sans", sans-serif;
    font-size: 29.5px;
    text-anchor: middle;
}
.halo {
    fill: #000;
    stroke: #fff;
    stroke-width: 5px;
    paint-order: stroke;
    font-family: "Noto Sans", sans-serif;
    font-size: 25.5px;
    text-anchor: middle;
}

/* map status */
.map-status {
    height: 50px;
    flex: none;
    background: #f6f8f8;
    border-bottom: 2px solid #d2d3d8;
    padding-left: 11px;
    display: flex;
    align-items: center;
    font-size: 22px;
    color: #333;
}
.scale-box {
    width: 199px;
    height: 43px;
    background: #fff;
    border: 2px solid #8c8c8c;
    display: flex;
    align-items: center;
    padding: 0 12px;
}
.scale-box span {
    flex: 1;
}
.drop {
    width: 11px;
    height: 7px;
}
.sep {
    display: block;
    width: 2px;
    height: 34px;
    background: #c4c4c4;
    flex: none;
}
.sep-a {
    margin: 0 8px 0 10px;
}
.tool-on {
    width: 40px;
    height: 42px;
    background: #99ccee;
    border: 2px solid #0c72b3;
}
.tool-on svg {
    width: 36px;
    height: 38px;
}
.st-grid {
    width: 27px;
    height: 32px;
    margin-left: 6px;
}
.st-snap {
    width: 34px;
    height: 38px;
    margin-left: 11px;
}
.st-guide {
    width: 34px;
    height: 38px;
    margin-left: 7px;
}
.st-north {
    width: 34px;
    height: 40px;
    margin-left: 6px;
}
.north-n {
    fill: #4da4dc;
    font-size: 22px;
    font-weight: 800;
}
.st-chev {
    width: 15px;
    height: 14px;
    margin-left: 12px;
    color: #444;
}
.map-status > .sep:nth-of-type(2) {
    margin-left: 18px;
}
.coords {
    width: 913px;
    padding-left: 288px;
    display: flex;
    align-items: center;
    white-space: nowrap;
    font-size: 23px;
}
.coords .st-chev {
    width: 18px;
    height: 16px;
    margin-left: 20px;
}
.sel-features {
    width: 281px;
    padding-left: 15px;
    display: flex;
    align-items: center;
    color: #a8a8a8;
    white-space: nowrap;
}
.sel-ico {
    width: 32px;
    height: 36px;
    margin-right: 7px;
}
.st-sheet {
    width: 25px;
    height: 32px;
    margin-left: 17px;
}
.sep-c {
    margin-left: 17px;
}
.pause {
    width: 24px;
    height: 36px;
    margin-left: 15px;
    border-left: 9px solid #666;
    border-right: 9px solid #666;
}
.sep-d {
    margin-left: 17px;
}
.map-status .st-refresh {
    margin-left: 12px;
}
.st-refresh {
    width: 32px;
    height: 34px;
}

/* attribute table */
.table-strip {
    margin-top: 12px;
}
.table-tab.active {
    width: 371px;
}
.tbl-ico {
    width: 30px;
    height: 30px;
    margin-right: 12px;
}
.table-body {
    flex: 1;
    padding-top: 3px;
    display: flex;
    flex-direction: column;
    min-height: 0;
}
.tbl-toolbar {
    height: 58px;
    margin: 0 5px 0 3px;
    background: #f6f8f8;
    border: 2px solid #d2d3d8;
    display: flex;
    align-items: center;
    padding-left: 11px;
    font-size: 23px;
    white-space: nowrap;
}
.tb-field {
    width: 65px;
    font-size: 22.5px;
    font-weight: 700;
}
.tb-ico {
    width: 31px;
    height: 34px;
    margin: 0 7px 0 14px;
}
.t-add {
    margin-left: 12px;
}
.t-calc {
    margin-left: 20px;
}
.sep-tb {
    margin: 0 12px 0 21px;
}
.tb-sel {
    width: 112px;
    font-size: 22.5px;
    font-weight: 700;
}
.t-sba {
    margin-left: 15px;
}
.t-zoom {
    margin-left: 20px;
}
.t-switch {
    margin-left: 19px;
}
.t-clear {
    margin-left: 21px;
    color: #bbb;
}
.t-delete {
    margin-left: 18px;
}
.t-copy {
    margin-left: 20px;
}
.dim {
    opacity: 0.9;
}
.dimmed {
    color: #bdbdbd;
}
.t-ham {
    width: 28px;
    height: 26px;
    margin: 0 14px 0 auto;
}
.grid {
    height: 295px;
    margin: 4px 5px 0 3px;
    padding-left: 2px;
    display: flex;
    background: #ebebeb;
    border: 2px solid #d2d3d8;
}
.grid-main {
    width: 1794px;
    flex: none;
}
.attr {
    width: 1794px;
    table-layout: fixed;
    border-collapse: separate;
    border-spacing: 0;
    font-size: 24.6px;
}
.c-row { width: 81px; }
.c-code { width: 323px; }
.c-zona { width: 111px; }
.c-suelo { width: 116px; }
.c-agm { width: 193px; }
.c-plv { width: 183px; }
.c-dp { width: 179px; }
.c-mbre { width: 98px; }
.c-fid { width: 168px; }
.c-sl { width: 321px; }
.c-last { width: 21px; }
.attr th {
    height: 56px;
    padding: 0 10px;
    text-align: left;
    font-size: 25.4px;
    font-weight: 700;
    letter-spacing: -0.2px;
    color: #4c4c4c;
    background: #ebebeb;
    border-right: 1px solid #dcdcdc;
    white-space: nowrap;
    overflow: hidden;
}
.attr th.r {
    padding: 0 8px;
}
.attr th.mbre {
    padding: 0 1px;
}
.attr th.col-sel {
    background: #c4e2f7;
    border-bottom: 5px solid #0079c1;
    border-right: 2px solid #8a8a8a;
}
.attr th.clip, .attr td.clip {
    padding: 0 0 0 9px;
    border-right: none;
    overflow: hidden;
}
.corner {
    background: #fff !important;
    position: relative;
}
.corner-tri {
    position: absolute;
    right: 7px;
    bottom: 9px;
    border-style: solid;
    border-width: 0 0 24px 24px;
    border-color: transparent transparent #c8c8c8 transparent;
}
.attr td {
    height: 57px;
    padding: 0 10px;
    background: #fff;
    border-right: 2px solid #d5d5d5;
    border-bottom: 3px solid #d5d5d5;
    color: #4c4c4c;
    white-space: nowrap;
    overflow: hidden;
}
.attr td.n {
    text-align: right;
    padding-right: 8px;
}
.attr td.rh {
    background: #ebebeb;
    padding: 0 0 0 10px;
    letter-spacing: -0.3px;
}
.attr .odd td {
    background: #ebebeb;
}
.attr td.col-edge {
    border-right: 2px solid #8a8a8a;
}
.attr .partial td {
    height: 24px;
    vertical-align: top;
}
.partial td div {
    height: 8px;
    line-height: 1;
    overflow: hidden;
    display: flex;
    align-items: flex-end;
}
.attr td.n div {
    justify-content: flex-end;
}
.hscroll {
    height: 42px;
    padding: 11px 0 0 14px;
    display: flex;
    align-items: flex-start;
}
.hs-l {
    width: 12px;
    height: 20px;
}
.hs-thumb {
    width: 842px;
    height: 22px;
    margin-left: 553px;
    border-radius: 11px;
    background: #b3b3b3;
}
.hs-r {
    width: 12px;
    height: 20px;
    margin-left: 346px;
}
.vscroll {
    width: 40px;
    flex: none;
    padding: 19px 0 0 9px;
    display: flex;
    flex-direction: column;
}
.vs-up, .vs-dn {
    width: 18px;
    height: 12px;
    margin-left: 3px;
}
.vs-thumb {
    width: 22px;
    height: 50px;
    margin-top: 37px;
    border-radius: 11px;
    background: #b3b3b3;
}
.vs-dn {
    margin-top: 105px;
}
.tbl-status {
    height: 56px;
    flex: none;
    background: #f6f8f8;
    border-bottom: 2px solid #d2d3d8;
    padding: 4px 0 0 3px;
    display: flex;
    align-items: center;
    font-size: 23px;
    white-space: nowrap;
}
.view-on {
    width: 64px;
    height: 44px;
    background: #bfc3c9;
    border: 2px solid #4da4dc;
    display: flex;
    align-items: center;
    justify-content: center;
    color: #666;
}
.vw-ico {
    width: 30px;
    height: 26px;
}
.vw2 {
    width: 30px;
    height: 20px;
    margin: -6px 0 0 20px;
}
.nav-first {
    width: 20px;
    height: 26px;
    margin-left: 35px;
}
.nav-last {
    width: 20px;
    height: 26px;
    margin-left: 25px;
}
.sel-count {
    width: 871px;
    margin-left: 25px;
}
.filters {
    width: 77px;
    font-size: 22px;
}
.filter-box {
    width: 84px;
    height: 48px;
    background: #eff0f2;
    display: flex;
    align-items: center;
    justify-content: center;
    gap: 8px;
}
.fb-ico {
    width: 30px;
    height: 30px;
}
.f-fun {
    width: 40px;
    height: 44px;
    margin-left: 8px;
}
.f-arr {
    width: 20px;
    height: 44px;
    margin-left: 10px;
}
.z-minus {
    width: 13px;
    height: 4px;
    margin-left: 29px;
    background: #666;
}
.slider {
    width: 200px;
    height: 8px;
    margin-left: 15px;
    background: #dcdcdc;
    position: relative;
}
.slider-fill {
    display: block;
    width: 109px;
    height: 8px;
    background: #666;
}
.slider-knob {
    position: absolute;
    left: 105px;
    top: -12px;
    width: 6px;
    height: 32px;
    background: #666;
}
.z-plus {
    width: 18px;
    height: 18px;
    margin-left: 14px;
    background: linear-gradient(#666, #666) center / 18px 4px no-repeat, linear-gradient(#666, #666) center / 4px 18px no-repeat;
}
.zoom-box {
    width: 121px;
    height: 44px;
    margin-left: 11px;
    background: #fff;
    display: flex;
    align-items: center;
    padding: 0 10px 0 14px;
    color: #333;
    font-size: 22px;
}
.zoom-box span {
    flex: 1;
}
.sep-z {
    margin: 0 15px 0 10px;
}

/* label class pane */
.label-pane {
    flex: 1;
    min-height: 0;
    background: #f6f8f8;
    border: 3px solid #d5d6db;
    border-bottom: none;
    border-radius: 6px 6px 0 0;
    display: flex;
    flex-direction: column;
    padding-bottom: 7px;
}
.lc-head {
    height: 66px;
    padding: 0 0 2px 10px;
}
.lc-title {
    flex: 1;
    font-size: 30px;
    white-space: nowrap;
}
.lc-head .c-x {
    margin-right: 14px;
}
.class-row {
    height: 26px;
    flex: none;
    display: flex;
    align-items: center;
    justify-content: center;
    position: relative;
    font-size: 28px;
    color: #4c4c4c;
    padding-right: 56px;
}
.cls-ham {
    position: absolute;
    right: 16px;
    top: 0;
    width: 28px;
    height: 26px;
}
.lc-tabs {
    height: 43px;
    margin: 26px 0 0 11px;
    flex: none;
    display: flex;
    align-items: flex-start;
    font-size: 24.2px;
}
.lc-tab {
    height: 43px;
    line-height: 38px;
}
.lc-tab.on {
    font-size: 23.5px;
    border-bottom: 4px solid #0079c1;
}
.lc-chev {
    width: 16px;
    height: 15px;
    margin: 14px 0 0 17px;
    color: #333;
}
.lc-tab.sym {
    margin: 0 22px 0 33px;
}
.lc-icons {
    height: 52px;
    margin: 22px 0 0 22px;
    flex: none;
    display: flex;
    align-items: flex-end;
}
.lc-i1, .lc-i3 {
    width: 48px;
    height: 50px;
}
.lc-i2 {
    width: 44px;
    margin: 0 20px 0 18px;
    text-align: center;
    font-size: 17px;
    line-height: 20px;
    color: #666;
}
.lc-i2 svg {
    width: 44px;
    height: 30px;
}
.lc-bar {
    width: 190px;
    height: 3px;
    margin: 11px 0 0 13px;
    background: #c8c8c8;
    flex: none;
}
.lc-bar span {
    display: block;
    width: 64px;
    height: 5px;
    background: #0079c1;
    position: relative;
    top: -1px;
}
.form-row {
    flex: none;
    display: flex;
    align-items: center;
    margin-left: 19px;
}
.form-row label {
    width: 116px;
}
.lang {
    height: 43px;
    margin-top: 30px;
}
.title-row {
    height: 49px;
    margin-top: 21px;
}
.combo {
    width: 200px;
    height: 100%;
    background: #fff;
    border: 2px solid #8c8c8c;
    display: flex;
    align-items: center;
    padding: 0 10px 0 5px;
    color: #333;
}
.combo span {
    flex: 1;
}
.combo.txt {
    padding-left: 8px;
}
.list-heads {
    height: 36px;
    margin: 26px 0 0 19px;
    flex: none;
    display: flex;
    gap: 11px;
}
.list-head {
    width: 310px;
    display: flex;
    justify-content: space-between;
    padding-right: 7px;
    align-items: flex-end;
    line-height: 30px;
}
.lh-funnel {
    width: 26px;
    height: 31px;
    margin-bottom: 5px;
}
.lists {
    height: 274px;
    margin: 18px 0 0 19px;
    flex: none;
    display: flex;
    gap: 11px;
}
.listbox {
    width: 310px;
    background: #fff;
    border: 2px solid #b0b0b0;
    display: flex;
    overflow: hidden;
}
.listbox ul {
    flex: 1;
    padding: 3px 0 0 10px;
    color: #333;
}
.listbox li {
    height: 40px;
    line-height: 40px;
}
.lb-scroll {
    width: 35px;
    background: #ebebeb;
    padding: 14px 0 0 9px;
    display: flex;
    flex-direction: column;
}
.lb-up, .lb-dn {
    width: 14px;
    height: 10px;
}
.lb-thumb {
    width: 18px;
    height: 83px;
    margin: 12px 0 0 -2px;
    border-radius: 9px;
    background: #b3b3b3;
}
.lb-thumb.short {
    height: 42px;
}
.lb-dn {
    margin-top: 125px;
}
.lb-thumb.short + .lb-dn {
    margin-top: 166px;
}
.insert-values {
    width: 310px;
    height: 44px;
    margin: 10px 0 0 19px;
    flex: none;
    background: #eff0f2;
    border: 2px solid #c8c8c8;
    display: flex;
    align-items: center;
    justify-content: space-between;
    padding: 0 10px;
    color: #9a9a9a;
}
.expr-label {
    height: 32px;
    margin: 6px 0 0 19px;
    flex: none;
    line-height: 32px;
}
.editor {
    width: 631px;
    height: 428px;
    margin: 9px 0 0 19px;
    flex: none;
    background: #fff;
    border: 2px solid #8c8c8c;
    display: flex;
}
.code {
    flex: 1;
    padding-top: 2px;
    font-family: "Liberation Mono", monospace;
    font-size: 21.6px;
    line-height: 32px;
    color: #333;
}
.ln {
    height: 32px;
    white-space: pre;
}
.ln.in {
    padding-left: 26px;
}
.hl {
    display: inline-block;
    background: #e2e7f1;
    height: 32px;
}
.code b {
    font-weight: 400;
}
.code .s { color: #e00000; }
.code .o { color: #777; }
.code .f { color: #008a1e; }
.code .p { color: #1f4fd0; }
.code .m { color: #800000; }
.code .k { color: #9ab54a; }
.wraps {
    width: 22px;
    padding-top: 9px;
}
.wraps svg {
    width: 18px;
    height: 16px;
    margin-bottom: 16px;
}
.expr-actions {
    height: 62px;
    flex: none;
    display: flex;
    align-items: center;
    justify-content: flex-end;
    gap: 43px;
    padding-right: 41px;
}
.expr-actions svg {
    width: 33px;
    height: 30px;
}
.opt {
    height: 48px;
    flex: none;
    margin-left: 9px;
    display: flex;
    align-items: center;
    white-space: nowrap;
    font-size: 22.8px;
}
.expr-actions + .opt {
    margin-top: 7px;
}
.cb.sq {
    height: 28px;
    border-radius: 0;
    margin-right: 8px;
}
.learn {
    height: 48px;
    flex: none;
    margin-left: 10px;
    line-height: 48px;
    color: #0069a8;
    text-decoration: none;
}
.buttons {
    margin-top: auto;
    display: flex;
    justify-content: flex-end;
    gap: 16px;
    flex: none;
}
button {
    width: 140px;
    height: 47px;
    background: #f6f8f8;
    border: 2px solid #b5b5b5;
    color: #c4c4c4;
    font: inherit;
}
.dock-tabs {
    height: 40px;
    flex: none;
    padding-left: 10px;
    display: flex;
    align-items: center;
    font-size: 22px;
    border-top: 2px solid #d5d6db;
    white-space: nowrap;
    letter-spacing: -0.2px;
}
.dock-tabs span:nth-child(1) { width: 107px; }
.dock-tabs span:nth-child(2) { width: 106px; }
.dock-tabs span:nth-child(4) { width: 114px; }
.dock-tabs span:nth-child(5) { width: 114px; }
.dock-tabs .on {
    width: 112px;
    height: 42px;
    margin-top: -2px;
    margin-right: 13px;
    padding-left: 12px;
    line-height: 38px;
    color: #0079c1;
    background: #f6f8f8;
    border: 2px solid #d5d6db;
    border-top: none;
    border-radius: 0 0 6px 6px;
}
```
